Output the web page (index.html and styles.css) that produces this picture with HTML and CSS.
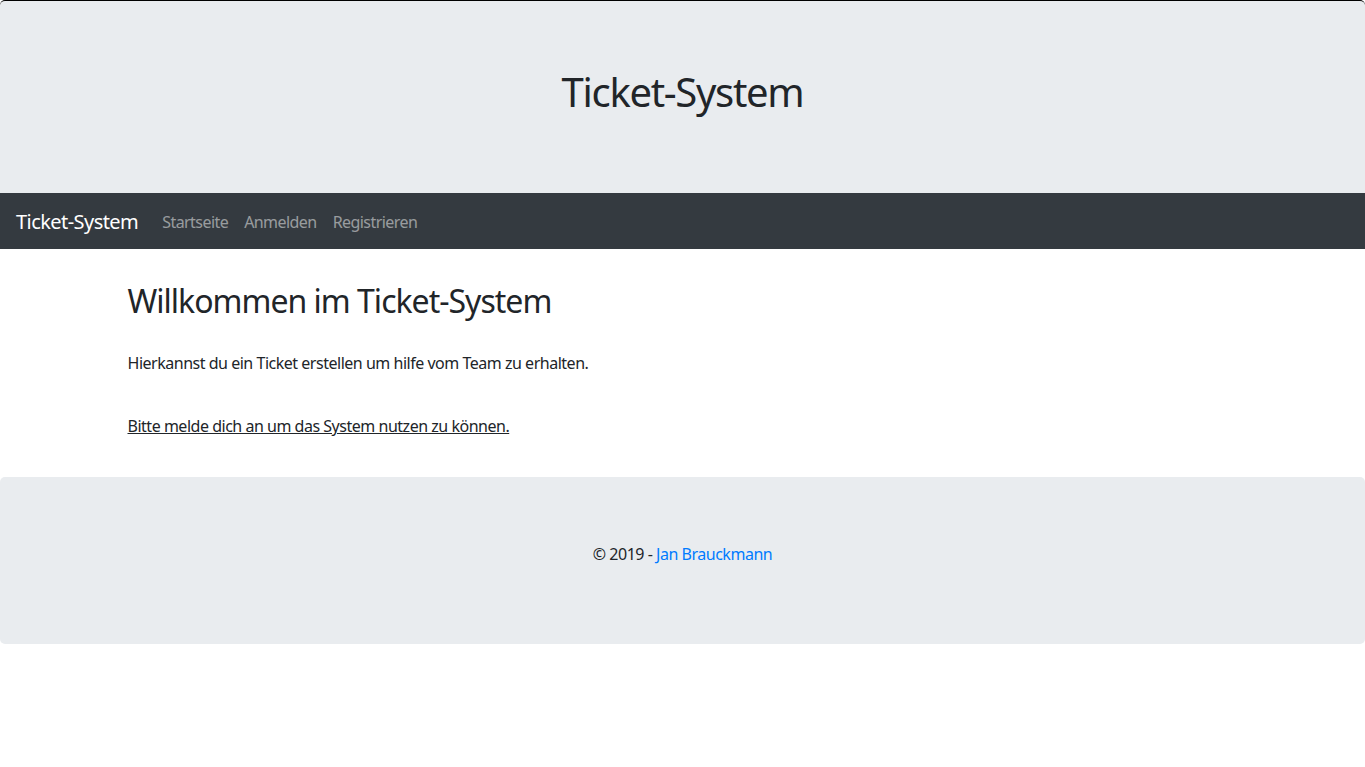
FILE: index.html
```html
<!DOCTYPE html>
<html lang="de">
<head>
<meta charset="utf-8">
<title>Ticket-System</title>
<link rel="stylesheet" href="styles.css">
</head>
<body>
<header class="jumbo">
  <h1 class="jumbo-title">Ticket-System</h1>
</header>
<nav class="navbar">
  <a class="brand" href="#">Ticket-System</a>
  <ul class="nav">
    <li><a class="nav-link" href="#">Startseite</a></li>
    <li><a class="nav-link" href="#">Anmelden</a></li>
    <li><a class="nav-link" href="#">Registrieren</a></li>
  </ul>
</nav>
<main class="container">
  <h2 class="welcome">Willkommen im Ticket-System</h2>
  <p class="lead-text">Hierkannst du ein Ticket erstellen um hilfe vom Team zu erhalten.</p>
  <p class="login-note"><a class="login-link" href="#">Bitte melde dich an um das System nutzen zu können.</a></p>
</main>
<footer class="footer">
  <p class="copy">© 2019 - <a class="author" href="#">Jan Brauckmann</a></p>
</footer>
</body>
</html>
```
FILE: styles.css
```css
* { box-sizing: border-box; }
html, body { margin: 0; padding: 0; background: #fff; }
body {
  font-family: "Noto Sans", "Open Sans", sans-serif;
  font-size: 16px;
  line-height: 1.5;
  letter-spacing: -0.03em;
  color: #212529;
}
a { text-decoration: none; }

.jumbo {
  height: 193px;
  border-top: 1px solid #000;
  background: #e9ecef;
  border-radius: 5px 5px 0 0;
  display: flex;
  align-items: center;
  justify-content: center;
  padding-bottom: 10px;
}
.jumbo-title {
  margin: 0;
  font-size: 40px;
  font-weight: 400;
  line-height: 1.2;
  letter-spacing: -0.033em;
}

.navbar {
  height: 56px;
  background: #343a40;
  display: flex;
  align-items: center;
  padding: 1px 16px 0;
}
.brand {
  color: #fff;
  font-size: 20px;
  margin-right: 16px;
  line-height: 1.5;
  letter-spacing: -0.028em;
}
.nav {
  list-style: none;
  margin: 0;
  padding: 0;
  display: flex;
}
.nav-link {
  display: block;
  padding: 8px;
  color: rgba(255,255,255,.5);
  letter-spacing: -0.035em;
}

.container {
  width: 1140px;
  margin: 0 auto;
  padding: 33px 15px 39px;
}
.welcome {
  margin: 0 0 31px;
  font-size: 32px;
  font-weight: 400;
  line-height: 1.2;
  letter-spacing: -0.031em;
}
.lead-text { margin: 0 0 39px; }
.login-note { margin: 0; }
.login-link { color: #212529; text-decoration: underline; }

.footer {
  height: 167px;
  background: #e9ecef;
  border-radius: 5px;
  display: flex;
  align-items: center;
  justify-content: center;
  padding-bottom: 13px;
}
.copy { margin: 0; }
.author { color: #007bff; }
```
